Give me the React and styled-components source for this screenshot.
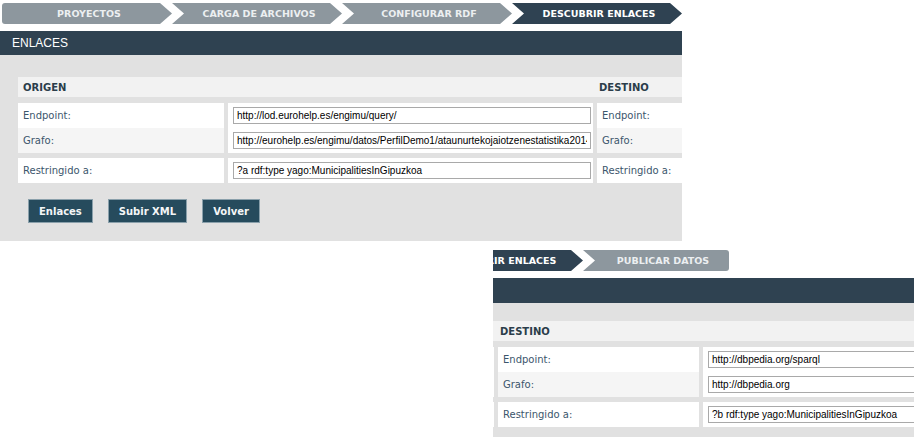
import React from "react";
import styled, { createGlobalStyle } from "styled-components";

const GlobalStyle = createGlobalStyle`
  body {
    margin: 0;
    background: #fff;
    font-family: "DejaVu Sans", Verdana, sans-serif;
  }
`;

const steps = [
  { label: "PROYECTOS", first: true },
  { label: "CARGA DE ARCHIVOS" },
  { label: "CONFIGURAR RDF" },
  { label: "DESCUBRIR ENLACES", active: true },
  { label: "PUBLICAR DATOS", last: true },
];

const origen = {
  endpoint: "http://lod.eurohelp.es/engimu/query/",
  grafo: "http://eurohelp.es/engimu/datos/PerfilDemo1/ataunurtekojaiotzenestatistika2014",
  restr: "?a rdf:type yago:MunicipalitiesInGipuzkoa",
};

const destino = {
  endpoint: "http://dbpedia.org/sparql",
  grafo: "http://dbpedia.org",
  restr: "?b rdf:type yago:MunicipalitiesInGipuzkoa",
};

// two crops of the same page, each a window onto it
const Viewport = styled.div`
  width: ${(p) => p.$w}px;
  height: ${(p) => p.$h}px;
  margin-left: ${(p) => p.$x}px;
  margin-top: ${(p) => p.$y}px;
  overflow: hidden;
`;

const Page = styled.div`
  width: 1014px;
  margin-left: ${(p) => -p.$shift}px;
  padding-top: ${(p) => p.$top}px;
`;

const Steps = styled.div`
  display: flex;
  height: 21px;
  padding-left: 2px;
  margin-bottom: 7px;
`;

const Step = styled.div`
  width: ${(p) => (p.$last ? 146 : 170)}px;
  height: 21px;
  display: flex;
  align-items: center;
  justify-content: center;
  padding-left: ${(p) => (p.$last ? 14 : 4)}px;
  box-sizing: border-box;
  background: ${(p) => (p.$active ? "#2f4252" : "#8d979e")};
  color: ${(p) => (p.$active ? "#ffffff" : "#eceff1")};
  font-size: 9.5px;
  font-weight: bold;
  white-space: nowrap;
  border-radius: ${(p) => (p.$first ? "3px 0 0 3px" : p.$last ? "0 3px 3px 0" : "0")};
  clip-path: ${(p) =>
    p.$first
      ? "polygon(0 0, calc(100% - 12px) 0, 100% 50%, calc(100% - 12px) 100%, 0 100%)"
      : p.$last
      ? "polygon(0 0, 100% 0, 100% 100%, 0 100%, 12px 50%)"
      : "polygon(0 0, calc(100% - 12px) 0, 100% 50%, calc(100% - 12px) 100%, 0 100%, 12px 50%)"};
`;

const TitleBar = styled.div`
  height: ${(p) => p.$h}px;
  background: #2f4251;
  color: #fff;
  font-family: "Liberation Sans", Arial, sans-serif;
  font-size: 12px;
  display: flex;
  align-items: center;
  padding-left: 12px;
`;

const Panel = styled.div`
  background: #e1e1e1;
  padding: ${(p) => p.$pad}px 0 18px 18px;
`;

const COLS = "206px 365px 201px 1fr";

const HeadRow = styled.div`
  display: grid;
  grid-template-columns: ${COLS};
  column-gap: 4px;
  height: 20px;
  background: #f2f2f2;
`;

const Heading = styled.div`
  grid-column: span 2;
  display: flex;
  align-items: center;
  padding-left: ${(p) => (p.$right ? 2 : 5)}px;
  font-size: 10px;
  font-weight: bold;
  color: #2b3d4a;
`;

const Group = styled.div`
  display: grid;
  grid-template-columns: ${COLS};
  column-gap: 4px;
  margin-top: ${(p) => p.$gap}px;
`;

const Label = styled.div`
  height: 25px;
  display: flex;
  align-items: center;
  padding-left: 5px;
  background: ${(p) => (p.$alt ? "#f5f5f5" : "#ffffff")};
  font-size: 10px;
  color: #3b566c;
`;

const Field = styled.div`
  height: 25px;
  display: flex;
  align-items: center;
  padding-left: 5px;
  background: #fff;
  overflow: hidden;
`;

const Input = styled.input`
  width: 358px;
  flex: none;
  height: 17px;
  box-sizing: border-box;
  border: 1px solid #a9a9a9;
  padding: 0 3px;
  font-family: "Liberation Sans", Arial, sans-serif;
  font-size: 10px;
  color: #000;
  background: #fff;
  outline: none;
`;

const Buttons = styled.div`
  display: flex;
  gap: 15px;
  margin: 16px 0 0 10px;
`;

const Button = styled.button`
  height: 24px;
  padding: 0 10px;
  background: #264b5d;
  border: 1px solid #8aa0ab;
  color: #f4f6f7;
  font-family: "DejaVu Sans", Verdana, sans-serif;
  font-size: 10px;
  font-weight: bold;
  cursor: pointer;
`;

const Screen = ({ shift, top, headH, pad }) => (
  <Page $shift={shift} $top={top}>
    <Steps>
      {steps.map((s) => (
        <Step key={s.label} $first={s.first} $last={s.last} $active={s.active}>
          {s.label}
        </Step>
      ))}
    </Steps>
    <TitleBar $h={headH}>ENLACES</TitleBar>
    <Panel $pad={pad}>
      <HeadRow>
        <Heading>ORIGEN</Heading>
        <Heading $right>DESTINO</Heading>
      </HeadRow>
      <Group $gap={6}>
        <Label>Endpoint:</Label>
        <Field><Input readOnly value={origen.endpoint} /></Field>
        <Label>Endpoint:</Label>
        <Field><Input readOnly value={destino.endpoint} /></Field>
        <Label $alt>Grafo:</Label>
        <Field><Input readOnly value={origen.grafo} /></Field>
        <Label $alt>Grafo:</Label>
        <Field><Input readOnly value={destino.grafo} /></Field>
      </Group>
      <Group $gap={5}>
        <Label>Restringido a:</Label>
        <Field><Input readOnly value={origen.restr} /></Field>
        <Label>Restringido a:</Label>
        <Field><Input readOnly value={destino.restr} /></Field>
      </Group>
      <Buttons>
        <Button>Enlaces</Button>
        <Button>Subir XML</Button>
        <Button>Volver</Button>
      </Buttons>
    </Panel>
  </Page>
);

export default function App() {
  return (
    <>
      <GlobalStyle />
      <Viewport $w={682} $h={242} $x={0} $y={0}>
        <Screen shift={0} top={3} headH={24} pad={22} />
      </Viewport>
      <Viewport $w={421} $h={187} $x={493} $y={8}>
        <Screen shift={592} top={0} headH={25} pad={18} />
      </Viewport>
    </>
  );
}
